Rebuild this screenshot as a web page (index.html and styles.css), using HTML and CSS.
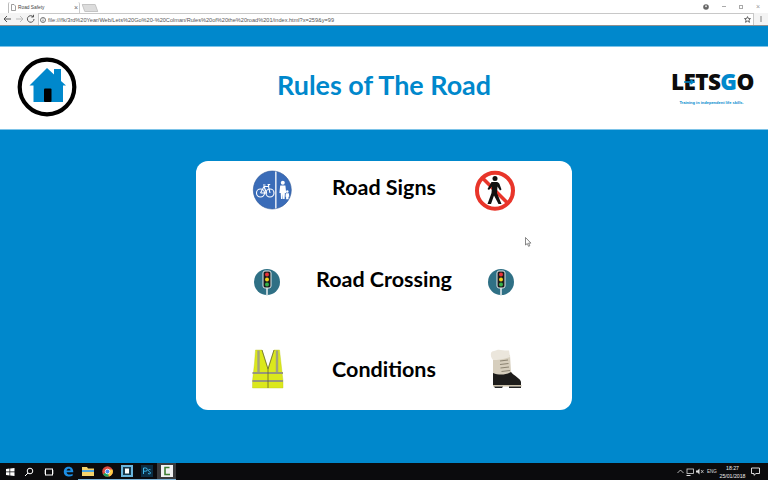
FILE: index.html
```html
<!DOCTYPE html>
<html lang="en">
<head>
    <meta charset="UTF-8">
    <title>Road Safety</title>
    <link rel="stylesheet" href="styles.css">
</head>
<body>
    <div class="tabstrip">
        <div class="tab">
            <svg class="tab-icon" width="5" height="7" viewBox="0 0 5 7"><path d="M.5.5h2.500L4.500 2v4.500h-4z" fill="#fff" stroke="#777" stroke-width=".7"/></svg>
            <span class="tab-title">Road Safety</span>
            <span class="tab-close">×</span>
        </div>
        <div class="tab-new"></div>
        <div class="win-buttons">
            <svg width="6" height="6" viewBox="0 0 6 6"><circle cx="3" cy="3" r="2.800" fill="#666"/><circle cx="3" cy="2.200" r="1" fill="#ddd"/></svg>
            <span class="win-min"></span>
            <span class="win-max"></span>
            <span class="win-close">×</span>
        </div>
    </div>
    <div class="toolbar">
        <svg class="nav" width="34" height="10" viewBox="0 0 34 10">
            <path d="M8 5H1.500M4 2L1 5l3 3" fill="none" stroke="#555" stroke-width="1"/>
            <path d="M13 5h6.500M17 2l3 3-3 3" fill="none" stroke="#bbb" stroke-width="1"/>
            <path d="M31 5a3.300 3.300 0 1 1-1-2.400M30.500 .8v2.200h-2.200" fill="none" stroke="#555" stroke-width="1"/>
        </svg>
        <div class="address">
            <svg width="6" height="6" viewBox="0 0 6 6"><circle cx="3" cy="3" r="2.500" fill="none" stroke="#555" stroke-width=".8"/><path d="M3 2.500v2M3 1.300v.6" stroke="#555" stroke-width=".8"/></svg>
            <span class="url">file:///fk/3rd%20Year/Web/Lets%20Go%20-%20Colman/Rules%20of%20the%20road%201/index.html?x=259&amp;y=99</span>
            <svg width="7" height="7" viewBox="0 0 7 7"><path d="M3.500.6l.9 2h2.100L4.900 4l.6 2.300-2-1.200-2 1.200L2.100 4 .5 2.600h2.100z" fill="none" stroke="#444" stroke-width=".8"/></svg>
        </div>
        <span class="menu-dots"></span>
    </div>

    <div class="band"></div>

    <header class="header">
        <svg class="home" width="62" height="62" viewBox="0 0 62 62">
            <circle cx="31" cy="31" r="27.300" fill="#fff" stroke="#000" stroke-width="4.200"/>
            <path d="M31 12L38 18.500V13H45V25L50 29.500H47V46H17.500V29.500H13.500Z" fill="#0088cc"/>
            <rect x="28" y="32.500" width="7.500" height="13.500" rx="1" fill="#000"/>
        </svg>
        <h1 class="title">Rules of The Road</h1>
        <div class="logo">
            <div class="logo-word">L<span class="logo-e">E<svg class="logo-arrow" width="12" height="6" viewBox="0 0 12 6"><path d="M0 3h9M6.500 .8L9.500 3 6.500 5.200" fill="none" stroke="#0088cc" stroke-width="1.500"/></svg></span>TS<span class="logo-g">G</span>O</div>
            <div class="logo-tag">Training in independent life skills.</div>
        </div>
    </header>

    <main class="stage">
        <div class="card">
            <div class="row row-signs">
                <svg class="pic" viewBox="0 0 64 48">
                    <circle cx="32.300" cy="24" r="19" fill="#3a6cb8" stroke="#2b5596" stroke-width=".6"/>
                    <rect x="35.200" y="5.500" width="1.300" height="37" fill="#fff"/>
                    <g fill="none" stroke="#fff" stroke-width="1.100">
                        <circle cx="20.500" cy="27" r="4"/><circle cx="30" cy="27" r="4"/>
                        <path d="M20.500 27l3.500-6.500h4.500l1.500 6.500M24 20.500l2.500 6.500h-6M23 19h2.500M29 20.500l-.8-2h2"/>
                    </g>
                    <g fill="#fff">
                        <circle cx="42.800" cy="16.800" r="2"/>
                        <path d="M40.200 19.500h5.200l.8 7.500h-1.300l-.3 6h-1.500l-.3-5-.3 5h-1.500l-.3-6h-1.300z"/>
                        <circle cx="47.300" cy="25.500" r="1.200"/>
                        <path d="M45.800 27.300h3l.5 3.500h-.8v2.400h-2.400v-2.400h-.6z"/>
                    </g>
                </svg>
                <span class="label">Road Signs</span>
                <svg class="pic" viewBox="0 0 64 48">
                    <circle cx="31" cy="24.700" r="18" fill="#fff" stroke="#e8352a" stroke-width="4"/>
                    <path d="M18.500 12L44 37.500" stroke="#e8352a" stroke-width="3.600"/>
                    <g fill="#111">
                        <circle cx="31" cy="12.500" r="2.500"/>
                        <path d="M27.500 16H33C34 16 35 17 35.500 18L37.500 23.500 36 24.500 33.500 20.500 33 27 37.500 38H34.500L30 29.500 27 38H23.500L27.500 27 28 20.500 25 24 23.500 23Z"/>
                    </g>
                </svg>
            </div>
            <div class="row row-crossing">
                <svg class="pic" viewBox="0 0 64 48">
                    <use href="#lights" x="-5" y="-1"/>
                </svg>
                <span class="label">Road Crossing</span>
                <svg class="pic" viewBox="0 0 64 48">
                    <use href="#lights" x="5" y="-1"/>
                </svg>
            </div>
            <div class="row row-conditions">
                <svg class="pic" viewBox="0 1 64 48">
                    <path d="M15.500 3H22L28 22 34 3H39.500L41 16 43 34V41H12.500V34L14.500 16Z" fill="#dbe81c" stroke="#bcc81a" stroke-width=".4"/>
                    <path d="M18.500 3.500V26M37 3.500V26" stroke="#a2a27e" stroke-width="2.400"/>
                    <path d="M12.500 26H43M12.500 34H43" stroke="#97977a" stroke-width="2.200"/>
                    <path d="M22 3L28 22 34 3M28 22V41" fill="none" stroke="#66662e" stroke-width=".8"/>
                </svg>
                <span class="label">Conditions</span>
                <svg class="pic" viewBox="0 1 64 48">
                    <path d="M29 10L46 8 47 25C50 29 56 31 57 36V38H29Z" fill="#d6cebd"/>
                    <path d="M27 6C28 3.500 32 4 33 3 36 2 40 4 45 3.500L46 10C40 12.500 33 13 29 13 27 11 26.500 8 27 6Z" fill="#ebe6dc"/>
                    <path d="M36 14L44 13M36 17.500L44.500 16.500M36.500 21L45 20M37.500 24.500L46 23.500" stroke="#8c8473" stroke-width="1.200"/>
                    <path d="M29 26C35 28.500 42 28 47 25 50 29 56 31 57 35V38H29Z" fill="#1d1c1b"/>
                    <rect x="29" y="38" width="28.500" height="1.500" fill="#c9bfa8"/>
                    <path d="M30 39.500H39L38 41H31ZM45 39.500H57V41H45Z" fill="#222"/>
                </svg>
            </div>
        </div>
        <svg class="cursor" width="7" height="10" viewBox="0 0 7 10"><path d="M.5.5v7.500l1.800-1.500 1.200 2.800 1.300-.5-1.200-2.700h2.300z" fill="#fff" stroke="#555" stroke-width=".7"/></svg>
    </main>

    <footer class="taskbar">
        <div class="task-icons">
            <span class="slot"><svg width="10" height="10" viewBox="0 0 10 10"><path d="M1 2l3.500-.5v3H1zM5.200 1.400L9.500 1v3.500H5.200zM1 5.200h3.500v3.200L1 8zM5.200 5.200h4.300V9l-4.300-.6z" fill="#fff"/></svg></span>
            <span class="slot"><svg width="10" height="10" viewBox="0 0 10 10"><circle cx="6" cy="4" r="2.800" fill="none" stroke="#fff"/><path d="M4 6L1 9" stroke="#fff"/></svg></span>
            <span class="slot"><svg width="10" height="8" viewBox="0 0 10 8"><rect x="1.500" y="1" width="7" height="6" fill="none" stroke="#fff"/><path d="M0 2v4M10 2v4" stroke="#999"/></svg></span>
            <span class="slot"><svg width="11" height="11" viewBox="0 0 11 11"><path d="M.8 6C.8 2.500 3 .7 5.700.7 8.600.7 10.300 2.800 10.300 6.200H3.600c.1 2.600 3.600 3.100 6 1.500v2.100c-3.400 1.700-8.800.8-8.800-3.800zM3.600 4.500h4c0-2.200-3.600-2.300-4 0z" fill="#1c8fe6"/></svg></span>
            <span class="slot is-open"><svg width="12" height="10" viewBox="0 0 12 10"><path d="M0 1h5l1 1.500h6V10H0z" fill="#f5d36b"/><rect y="4" width="12" height="2" fill="#4aa5e0"/></svg></span>
            <span class="slot is-open"><svg width="11" height="11" viewBox="0 0 11 11"><circle cx="5.500" cy="5.500" r="5.300" fill="#dd4b3e"/><path d="M5.500 5.500L1 8.200A5.300 5.300 0 0 0 7 10.600z" fill="#1da462"/><path d="M5.500 5.500L7 10.600A5.300 5.300 0 0 0 10.500 3.500H5.500z" fill="#ffcd46"/><circle cx="5.500" cy="5.500" r="2.300" fill="#4a8af4" stroke="#fff" stroke-width=".8"/></svg></span>
            <span class="slot is-open"><svg width="12" height="12" viewBox="0 0 12 12"><rect width="12" height="12" fill="#6ab5dc"/><rect x="2" y="2" width="8" height="8" fill="#17384a"/><rect x="4" y="3.500" width="4" height="5" fill="#fff"/></svg></span>
            <span class="slot is-open"><svg width="12" height="12" viewBox="0 0 12 12"><rect width="12" height="12" fill="#0b2e44"/><path d="M2.500 9V3h2.200a1.500 1.500 0 0 1 0 3.200H2.500M7 8.500c1.500.8 2.800.2 2.500-.8S7.300 6.500 7.300 5.500 8.500 4.200 9.500 4.700" fill="none" stroke="#3fb6e8"/></svg></span>
            <span class="slot is-active"><svg width="12" height="12" viewBox="0 0 12 12"><rect width="12" height="12" fill="#f2f2f2"/><path d="M8.500 2.500H4V9.500h5" fill="none" stroke="#3e7d32" stroke-width="1.600"/></svg></span>
        </div>
        <div class="tray">
            <div class="tray-status">
                <svg width="7" height="5" viewBox="0 0 7 5"><path d="M.5 4l3-3 3 3" fill="none" stroke="#ddd" stroke-width=".8"/></svg>
                <svg width="8" height="8" viewBox="0 0 8 8"><rect x="1" y="1" width="6.500" height="4.500" fill="none" stroke="#ddd" stroke-width=".8"/><path d="M.5 7.500h4" stroke="#ddd"/></svg>
                <svg width="9" height="7" viewBox="0 0 9 7"><path d="M0 2.500h1.500L3.500 .5v6l-2-2H0z" fill="#ddd"/><path d="M5 2l2.500 3M7.500 2L5 5" stroke="#ddd" stroke-width=".7"/></svg>
                <span class="lang">ENG</span>
            </div>
            <span class="clock">18:27<br>25/01/2018</span>
            <svg width="9" height="9" viewBox="0 0 9 9"><path d="M.5 1h8v5.500H5L3 8.300V6.500H.5z" fill="none" stroke="#eee" stroke-width=".9"/></svg>
        </div>
    </footer>

    <svg class="defs" width="0" height="0">
        <defs>
            <g id="lights">
                <circle cx="32" cy="25" r="13" fill="#2f7085"/>
                <rect x="31.200" y="30" width="1.600" height="9" fill="#dfe8ea"/>
                <rect x="28" y="14" width="8" height="17" rx="2" fill="#1a1a1a" stroke="#dfe8ea" stroke-width="1"/>
                <circle cx="32" cy="17.500" r="2" fill="#e8333a"/>
                <circle cx="32" cy="22.500" r="2" fill="#f2d21e"/>
                <circle cx="32" cy="27.500" r="2" fill="#35b34a"/>
            </g>
        </defs>
    </svg>
</body>
</html>
```

FILE: styles.css
```css
* {
    box-sizing: border-box;
}
html, body {
    margin: 0;
    height: 100%;
}
body {
    width: 768px;
    height: 480px;
    overflow: hidden;
    display: flex;
    flex-direction: column;
    background-color: #0088cc;
    font-family: "Liberation Sans", Arial, sans-serif;
}

/* browser chrome */
.tabstrip {
    height: 13px;
    flex: none;
    display: flex;
    align-items: flex-end;
    padding-left: 8px;
    background-color: #fff;
}
.tab {
    width: 72px;
    height: 11px;
    display: flex;
    align-items: center;
    gap: 2px;
    padding: 0 0 1px 2px;
    border-left: 1px solid #bbb;
    border-right: 1px solid #ccc;
    border-radius: 2px 2px 0 0;
}
.tab-title {
    font-size: 4.800px;
    color: #444;
    flex: 1;
}
.tab-close {
    font-size: 7px;
    line-height: 7px;
    color: #666;
    margin-right: 1px;
}
.tab-new {
    width: 14px;
    height: 8px;
    margin-left: 3px;
    margin-bottom: 1px;
    background-color: #dcdcdc;
    border: 1px solid #c4c4c4;
    border-radius: 1px;
    transform: skewX(20deg);
}
.win-buttons {
    margin-left: auto;
    height: 13px;
    display: flex;
    align-items: center;
    gap: 13px;
    padding-right: 8px;
}
.win-min {
    width: 4px;
    height: 1px;
    background-color: #aaa;
}
.win-max {
    width: 4px;
    height: 4px;
    border: 1px solid #aaa;
}
.win-close {
    font-size: 7px;
    line-height: 7px;
    color: #999;
}
.toolbar {
    height: 13px;
    flex: none;
    display: flex;
    align-items: center;
    padding-left: 3px;
    background-color: #f4f4f4;
    border-bottom: 1px solid #8f8f8f;
}
.nav {
    flex: none;
}
.address {
    width: 716px;
    height: 12px;
    flex: none;
    margin-left: 1px;
    display: flex;
    align-items: center;
    gap: 2px;
    padding: 0 2px 0 1px;
    background-color: #fff;
    border: 1px solid #c8c8c8;
    border-bottom: 0;
}
.url {
    font-size: 5.600px;
    color: #555;
    white-space: nowrap;
    flex: 1;
}
.menu-dots {
    width: 2px;
    height: 6px;
    margin-left: 6px;
    background-color: #bbb;
}

/* page */
.band {
    height: 21px;
    flex: none;
    background-color: #0088cc;
    border-bottom: 1px solid #7cc3e8;
}
.header {
    height: 83px;
    flex: none;
    display: grid;
    grid-template-columns: 1fr auto 1fr;
    align-items: center;
    padding: 0 16px 2px;
    background-color: #fff;
    border-bottom: 1px solid #7cc3e8;
}
.home {
    display: block;
}
.title {
    margin: 0 0 6px;
    font-family: Lato, "Open Sans", sans-serif;
    font-size: 26.900px;
    font-weight: 700;
    color: #0088cc;
}
.logo {
    justify-self: end;
    width: 81px;
    padding-top: 1px;
    text-align: left;
}
.logo-word {
    font-family: "Open Sans", sans-serif;
    font-size: 22.500px;
    font-weight: 800;
    line-height: 22px;
    letter-spacing: -.6px;
    color: #0c0c0c;
    white-space: nowrap;
}
.logo-e {
    position: relative;
}
.logo-arrow {
    position: absolute;
    left: 0;
    top: 13px;
}
.logo-g {
    color: #0088cc;
}
.logo-tag {
    margin-top: 7px;
    font-size: 4px;
    font-weight: 700;
    color: #0088cc;
    white-space: nowrap;
    text-align: center;
}
.stage {
    position: relative;
    flex: 1;
    padding-top: 31px;
}
.card {
    width: 376px;
    height: 249px;
    margin-left: 196px;
    padding: 5px 44px 0;
    background-color: #fff;
    border-radius: 12px;
}
.row {
    height: 48px;
    display: grid;
    grid-template-columns: 64px 1fr 64px;
    align-items: center;
}
.row-crossing {
    margin-top: 44px;
}
.row-conditions {
    margin-top: 42px;
}
.pic {
    width: 64px;
    height: 48px;
    display: block;
}
.label {
    padding-bottom: 6px;
    font-family: Lato, "Open Sans", sans-serif;
    font-size: 21.500px;
    font-weight: 700;
    color: #000;
    text-align: center;
    white-space: nowrap;
}
.cursor {
    position: absolute;
    left: 525px;
    top: 107px;
}

/* windows taskbar */
.taskbar {
    height: 17px;
    flex: none;
    display: flex;
    justify-content: space-between;
    background-color: #0b0b0d;
}
.task-icons {
    display: flex;
}
.slot {
    width: 19.600px;
    height: 17px;
    display: flex;
    align-items: center;
    justify-content: center;
}
.is-open {
    border-bottom: 1px solid #7db4d8;
}
.is-active {
    background-color: #3a3a3c;
    border-bottom: 1px solid #7db4d8;
}
.tray {
    display: flex;
    align-items: center;
    padding-right: 8px;
}
.tray-status {
    display: flex;
    align-items: center;
    gap: 2px;
}
.lang {
    width: 10px;
    font-size: 4.500px;
    color: #ddd;
}
.clock {
    width: 29px;
    margin: 0 4px 0 1px;
    font-size: 5.200px;
    line-height: 8px;
    color: #eee;
    text-align: center;
}
.defs {
    position: absolute;
}
```
